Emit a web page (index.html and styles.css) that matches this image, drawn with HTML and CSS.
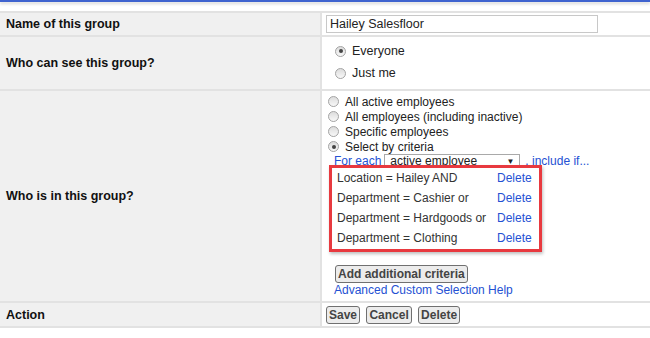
FILE: index.html
```html
<!DOCTYPE html>
<html lang="en">

<head>
    <meta charset="UTF-8">
    <title>Edit Group</title>
    <link rel="stylesheet" href="styles.css">
</head>

<body>
    <div class="topbar"></div>

    <table class="group-form">
        <tr class="row-name">
            <td class="label">Name of this group</td>
            <td class="value"><input class="name-input" type="text" value="Hailey Salesfloor"></td>
        </tr>
        <tr class="row-visibility">
            <td class="label">Who can see this group?</td>
            <td class="value visibility">
                <div class="opt wide"><span class="radio checked"></span>Everyone</div>
                <div class="opt wide"><span class="radio"></span>Just me</div>
            </td>
        </tr>
        <tr class="row-members">
            <td class="label">Who is in this group?</td>
            <td class="value members">
                <div class="opt"><span class="radio"></span>All active employees</div>
                <div class="opt"><span class="radio"></span>All employees (including inactive)</div>
                <div class="opt"><span class="radio"></span>Specific employees</div>
                <div class="opt"><span class="radio checked"></span>Select by criteria</div>

                <div class="for-each">
                    <span class="link">For each</span>
                    <span class="select">active employee<span class="arrow">&#9660;</span></span>
                    <span class="link">, include if...</span>
                </div>

                <!-- criteria list, highlighted -->
                <div class="criteria">
                    <span>Location = Hailey AND</span><span class="link">Delete</span>
                    <span>Department = Cashier or</span><span class="link">Delete</span>
                    <span>Department = Hardgoods or</span><span class="link">Delete</span>
                    <span>Department = Clothing</span><span class="link">Delete</span>
                </div>

                <button class="btn add-btn">Add additional criteria</button>
                <div class="link help">Advanced Custom Selection Help</div>
            </td>
        </tr>
        <tr class="row-action">
            <td class="label">Action</td>
            <td class="value actions">
                <button class="btn">Save</button>
                <button class="btn">Cancel</button>
                <button class="btn">Delete</button>
            </td>
        </tr>
    </table>
</body>

</html>
```

FILE: styles.css
```css
/* Page */
body {
    margin: 0;
    background: #fff;
    font-family: 'Liberation Sans', Arial, sans-serif;
    font-size: 12px;
    color: #222;
}

.topbar {
    height: 2px;
    background: #3f63cf;
    box-shadow: 0 2px 3px rgba(0, 0, 0, 0.18);
    margin-bottom: 9px;
}

/* Form table */
.group-form {
    width: 100%;
    border-collapse: collapse;
}

.group-form td {
    border-top: 2px solid #e2e2e2;
    border-bottom: 2px solid #e2e2e2;
    padding: 0;
    white-space: nowrap;
}

.label {
    width: 314px;
    padding-left: 6px !important;
    background: #f0f0f0;
    border-right: 2px solid #e2e2e2;
    font-weight: bold;
    font-size: 12.5px;
    color: #111;
}

.value {
    vertical-align: top;
}

.row-name td {
    height: 22px;
}

.name-input {
    display: block;
    margin: 2px 0 0 4px;
    width: 272px;
    height: 18px;
    box-sizing: border-box;
    border: 1px solid #c8c8c8;
    padding: 0 3px;
    font: inherit;
    font-size: 12.5px;
    color: #222;
}

/* Radios */
.opt {
    display: flex;
    align-items: center;
    height: 15px;
    padding-left: 6px;
}

.opt.wide {
    height: 22px;
    padding-left: 13px;
    font-size: 12.5px;
}

.radio {
    width: 11px;
    height: 11px;
    box-sizing: border-box;
    border: 1px solid #a4a4a4;
    border-radius: 50%;
    background: linear-gradient(#dcdcdc, #f8f8f8);
    margin-right: 6px;
    display: flex;
    align-items: center;
    justify-content: center;
}

.radio.checked::after {
    content: "";
    width: 4px;
    height: 4px;
    border-radius: 50%;
    background: #444;
}

.visibility {
    padding: 3px 0 5px 0 !important;
}

.members {
    padding: 3px 0 3px 0 !important;
}

.link {
    color: #2451d3;
}

/* For each line */
.for-each {
    display: flex;
    align-items: center;
    height: 14px;
    padding-left: 12px;
}

.select {
    display: flex;
    justify-content: space-between;
    align-items: center;
    width: 136px;
    height: 14px;
    box-sizing: border-box;
    border: 1px solid #a9a9a9;
    margin: 0 5px 0 3px;
    padding: 0 5px;
    color: #222;
}

.arrow {
    font-size: 8px;
}

/* Highlighted criteria */
.criteria {
    position: relative;
    z-index: 1;
    display: grid;
    grid-template-columns: 160px auto;
    grid-auto-rows: 20px;
    align-items: center;
    width: 213px;
    box-sizing: border-box;
    margin: -3px 0 0 7px;
    padding: 0 0 1px 5px;
    border: 3px solid #e8393f;
    background: #fff;
    box-shadow: 1px 2px 3px rgba(0, 0, 0, 0.25);
    color: #333;
}

/* Buttons */
.btn {
    font: inherit;
    font-weight: bold;
    color: #444;
    background: #ececec;
    border: 1px solid #707070;
    border-radius: 3px;
    height: 18px;
    padding: 0 2px;
    line-height: 14px;
}

.add-btn {
    display: block;
    margin: 13px 0 0 13px;
}

.help {
    height: 15px;
    line-height: 15px;
    padding-left: 12px;
}

.actions {
    padding: 3px 0 2px 4px !important;
}

.actions .btn {
    margin-right: 3px;
}
```
